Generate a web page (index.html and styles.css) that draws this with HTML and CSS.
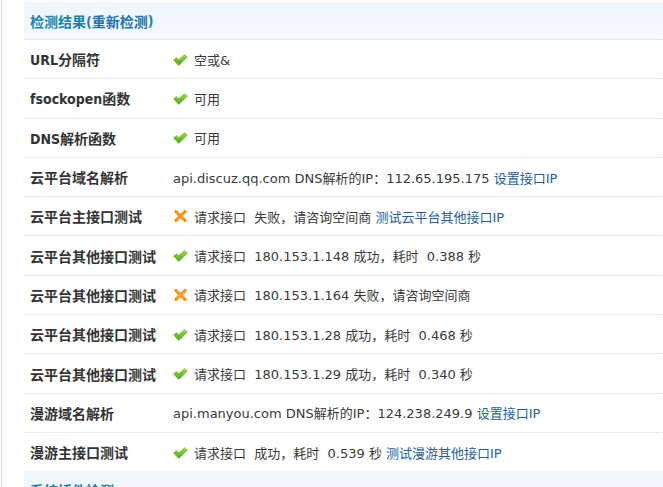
FILE: index.html
```html
<!DOCTYPE html>
<html>
<head>
<meta charset="utf-8">
<link rel="stylesheet" href="styles.css">
</head>
<body>
<div class="frame">
  <div class="panel">
    <div class="head">检测结果(<span>重新检测</span>)</div>
    <div class="row"><div class="label">URL分隔符</div><div class="val"><svg class="ok" width="15" height="12" viewBox="0 0 15 12"><defs><linearGradient id="g1" x1="0" y1="0" x2="0" y2="1"><stop offset="0" stop-color="#a2de55"/><stop offset="1" stop-color="#4fa318"/></linearGradient></defs><polygon points="0,6 3.4,3 5.8,5.3 11.4,0 15,3 5.8,11.8" fill="url(#g1)"/></svg>空或&amp;</div></div>
    <div class="row"><div class="label">fsockopen函数</div><div class="val"><svg class="ok" width="15" height="12" viewBox="0 0 15 12"><polygon points="0,6 3.4,3 5.8,5.3 11.4,0 15,3 5.8,11.8" fill="url(#g1)"/></svg>可用</div></div>
    <div class="row"><div class="label">DNS解析函数</div><div class="val"><svg class="ok" width="15" height="12" viewBox="0 0 15 12"><polygon points="0,6 3.4,3 5.8,5.3 11.4,0 15,3 5.8,11.8" fill="url(#g1)"/></svg>可用</div></div>
    <div class="row"><div class="label">云平台域名解析</div><div class="val">api.discuz.qq.com DNS解析的IP：112.65.195.175 <a class="lnk" href="#">设置接口IP</a></div></div>
    <div class="row"><div class="label">云平台主接口测试</div><div class="val"><svg class="bad" width="13" height="12" viewBox="0 0 13 12"><path d="M2,1.6 L11,10.4 M11,1.6 L2,10.4" stroke="#f2901c" stroke-width="3.4" stroke-linecap="round"/><path d="M2.6,2.2 L10.4,9.8 M10.4,2.2 L2.6,9.8" stroke="#f9b452" stroke-width="1" stroke-linecap="round"/></svg>请求接口&nbsp; 失败，请咨询空间商 <a class="lnk" href="#">测试云平台其他接口IP</a></div></div>
    <div class="row"><div class="label">云平台其他接口测试</div><div class="val"><svg class="ok" width="15" height="12" viewBox="0 0 15 12"><polygon points="0,6 3.4,3 5.8,5.3 11.4,0 15,3 5.8,11.8" fill="url(#g1)"/></svg>请求接口&nbsp; 180.153.1.148 成功，耗时&nbsp; 0.388 秒</div></div>
    <div class="row"><div class="label">云平台其他接口测试</div><div class="val"><svg class="bad" width="13" height="12" viewBox="0 0 13 12"><path d="M2,1.6 L11,10.4 M11,1.6 L2,10.4" stroke="#f2901c" stroke-width="3.4" stroke-linecap="round"/><path d="M2.6,2.2 L10.4,9.8 M10.4,2.2 L2.6,9.8" stroke="#f9b452" stroke-width="1" stroke-linecap="round"/></svg>请求接口&nbsp; 180.153.1.164 失败，请咨询空间商</div></div>
    <div class="row"><div class="label">云平台其他接口测试</div><div class="val"><svg class="ok" width="15" height="12" viewBox="0 0 15 12"><polygon points="0,6 3.4,3 5.8,5.3 11.4,0 15,3 5.8,11.8" fill="url(#g1)"/></svg>请求接口&nbsp; 180.153.1.28 成功，耗时&nbsp; 0.468 秒</div></div>
    <div class="row"><div class="label">云平台其他接口测试</div><div class="val"><svg class="ok" width="15" height="12" viewBox="0 0 15 12"><polygon points="0,6 3.4,3 5.8,5.3 11.4,0 15,3 5.8,11.8" fill="url(#g1)"/></svg>请求接口&nbsp; 180.153.1.29 成功，耗时&nbsp; 0.340 秒</div></div>
    <div class="row"><div class="label">漫游域名解析</div><div class="val">api.manyou.com DNS解析的IP：124.238.249.9 <a class="lnk" href="#">设置接口IP</a></div></div>
    <div class="row last"><div class="label">漫游主接口测试</div><div class="val"><svg class="ok" width="15" height="12" viewBox="0 0 15 12"><polygon points="0,6 3.4,3 5.8,5.3 11.4,0 15,3 5.8,11.8" fill="url(#g1)"/></svg>请求接口&nbsp; 成功，耗时&nbsp; 0.539 秒 <a class="lnk" href="#">测试漫游其他接口IP</a></div></div>
    <div class="head">系统插件检测</div>
  </div>
</div>
</body>
</html>
```
FILE: styles.css
```css
html, body {
  margin: 0;
  padding: 0;
  background: #fff;
  overflow: hidden;
}
.frame {
  margin-left: 1px;
  border-left: 1px solid #c9dcec;
  padding-left: 22px;
  padding-top: 2px;
  height: 487px;
  box-sizing: border-box;
}
.panel {
  display: flex;
  flex-direction: column;
}
.head {
  height: 38px;
  box-sizing: border-box;
  padding-left: 6px;
  display: flex;
  align-items: center;
  background: linear-gradient(#eff6fd, #f6f9fe);
  border-bottom: 1px dotted #d3e0ea;
  font-family: "DejaVu Sans Condensed", "Liberation Sans", "Noto Sans CJK SC", sans-serif;
  font-weight: bold;
  font-size: 14px;
  color: #1683b3;
  flex: none;
}
.head span {
  color: #1a72b0;
}
.row {
  display: grid;
  grid-template-columns: 149px 1fr;
  align-items: center;
  height: 39.3px;
  box-sizing: border-box;
  border-bottom: 1px dotted #d3e0ea;
  flex: none;
}
.row.last {
  border-bottom: none;
  height: 38.3px;
}
.label {
  padding-left: 6px;
  font-family: "DejaVu Sans Condensed", "Liberation Sans", "Noto Sans CJK SC", sans-serif;
  font-weight: bold;
  font-size: 14px;
  color: #333;
  white-space: nowrap;
}
.val {
  display: flex;
  align-items: center;
  font-family: "DejaVu Sans", "Noto Sans CJK SC", sans-serif;
  font-size: 13px;
  color: #3a3a3a;
  white-space: pre;
}
.ok {
  margin-right: 6px;
  margin-top: 1px;
  flex: none;
}
.bad {
  margin-left: 1px;
  margin-right: 7px;
  flex: none;
}
.lnk {
  color: #22609c;
  text-decoration: none;
}
```
